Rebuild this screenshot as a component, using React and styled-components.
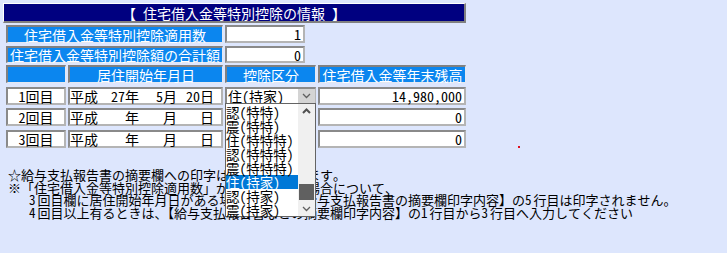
import React from "react";
import styled, { createGlobalStyle } from "styled-components";

const GlobalStyle = createGlobalStyle`
  html, body {
    margin: 0;
    padding: 0;
    background: #dde6fd;
  }
  body {
    font-family: "Noto Sans Mono CJK JP", "Noto Sans CJK JP", sans-serif;
    font-size: 14px;
    color: #000;
  }
`;

const Page = styled.div`
  position: relative;
  width: 727px;
  height: 253px;
  padding: 3px 0 0 3px;
  box-sizing: border-box;
  overflow: hidden;
`;

const TitleBar = styled.div`
  width: 463px;
  height: 20px;
  box-sizing: border-box;
  background: #000080;
  border-top: 1px solid #ffffff;
  border-left: 1px solid #ffffff;
  border-right: 2px solid #808080;
  border-bottom: 2px solid #808080;
  color: #fff;
  display: flex;
  align-items: center;
  justify-content: center;
  line-height: 14px;
  white-space: pre;
`;

const Table = styled.div`
  display: grid;
  grid-template-columns: 60px 155px 91px 148px;
  column-gap: 2px;
  margin-left: 3px;
`;

const Row = styled.div`
  display: contents;
`;

const Cell = styled.div`
  grid-column: ${(p) => p.$col || "auto"};
  height: ${(p) => p.$h || 18}px;
  margin-top: ${(p) => p.$mt || 0}px;
  box-sizing: border-box;
  display: flex;
  align-items: center;
  line-height: 14px;
  white-space: pre;
  position: relative;
`;

const Label = styled(Cell)`
  background: #0b86ef;
  color: #fff;
  border-top: 2px solid #808080;
  border-left: 2px solid #808080;
  border-right: 1px solid #e4e8f0;
  border-bottom: 1px solid #e4e8f0;
  justify-content: center;
`;

const Field = styled(Cell)`
  background: #fff;
  border-top: 2px solid #8a8a8a;
  border-left: 2px solid #8a8a8a;
  border-right: 2px solid #b4b4b4;
  border-bottom: 2px solid #b4b4b4;
  justify-content: ${(p) => (p.$align === "right" ? "flex-end" : p.$align === "center" ? "center" : "flex-start")};
  padding: 0 ${(p) => (p.$pad ?? 2)}px;
  width: ${(p) => (p.$w ? `${p.$w}px` : "auto")};
`;

const DateGrid = styled.div`
  display: grid;
  grid-template-columns: 27px 28px 14px 24px 14px 23px 14px;
  text-align: right;
  width: 100%;
  & > span:first-child {
    text-align: left;
  }
`;

const SelectField = styled(Field)`
  padding: 0 0 0 1px;
  justify-content: space-between;
  border-right: 1px solid #b4b4b4;
`;

const SelectButton = styled.div`
  width: 17px;
  height: 100%;
  background: #d4d4d4;
  display: flex;
  align-items: center;
  justify-content: center;
`;

const DropList = styled.div`
  position: absolute;
  top: 100%;
  left: -2px;
  width: 91px;
  height: 114px;
  box-sizing: border-box;
  background: #fff;
  border: 1px solid #646464;
  display: flex;
  z-index: 5;
`;

const Options = styled.div`
  flex: 1;
  padding-top: 1px;
`;

const Option = styled.div`
  height: 14px;
  line-height: 14px;
  font-size: 13.5px;
  white-space: pre;
  background: ${(p) => (p.$sel ? "#0078d7" : "transparent")};
  color: ${(p) => (p.$sel ? "#fff" : "#000")};
`;

const ScrollTrack = styled.div`
  width: 17px;
  background: #f0f0f0;
  display: flex;
  flex-direction: column;
  align-items: center;
  justify-content: space-between;
  padding: 4px 0 4px;
  box-sizing: border-box;
`;

const Thumb = styled.div`
  width: 15px;
  height: 16px;
  background: #606060;
  margin-top: auto;
  margin-bottom: 6px;
`;

const Notes = styled.div`
  margin: 21px 0 0 5px;
  font-size: 13px;
  line-height: 12.6px;
  white-space: pre;
`;

const NoteLine = styled.div`
  padding-left: ${(p) => p.$indent || 0}px;
`;

const Num = styled.span`
  display: inline-block;
  width: 8.5px;
`;

const Dot = styled.div`
  position: absolute;
  left: 518px;
  top: 146px;
  width: 2px;
  height: 2px;
  background: #e01020;
`;

const Chevron = ({ up }) => (
  <svg width="9" height="6" viewBox="0 0 9 6">
    <polyline
      points={up ? "1,5 4.5,1.5 8,5" : "1,1 4.5,4.5 8,1"}
      fill="none"
      stroke={up ? "#505050" : "#606060"}
      strokeWidth={up ? 2 : 1.3}
    />
  </svg>
);

const options = [
  "認(特特)",
  "震(特特)",
  "住(特特特)",
  "認(特特特)",
  "震(特特特)",
  "住(持家)",
  "認(持家)",
  "震(持家)",
];

const rows = [
  { no: "1回目", y: "27", m: "5", d: "20", amount: "14,980,000", mt: 4 },
  { no: "2回目", y: "", m: "", d: "", amount: "0", mt: 3 },
  { no: "3回目", y: "", m: "", d: "", amount: "0", mt: 4 },
];

export default function App() {
  return (
    <>
      <GlobalStyle />
      <Page>
        <TitleBar>{"【 住宅借入金等特別控除の情報 】"}</TitleBar>
        <Table>
          <Row>
            <Label $col="1 / 3" $mt={2}>住宅借入金等特別控除適用数</Label>
            <Field $col="3" $w={80} $mt={2} $align="right">1</Field>
          </Row>
          <Row>
            <Label $col="1 / 3" $mt={3} $h={17}>住宅借入金等特別控除額の合計額</Label>
            <Field $col="3" $w={80} $mt={3} $h={17} $align="right">0</Field>
          </Row>
          <Row>
            <Label $col="1" $mt={2}></Label>
            <Label $col="2" $mt={2}>居住開始年月日</Label>
            <Label $col="3" $mt={2}>控除区分</Label>
            <Label $col="4" $mt={2}>住宅借入金等年末残高</Label>
          </Row>
          {rows.map((r, i) => (
            <Row key={i}>
              <Field $col="1" $mt={r.mt} $align="center">{r.no}</Field>
              <Field $col="2" $mt={r.mt} $pad={0}>
                <DateGrid>
                  <span>平成</span>
                  <span>{r.y}</span>
                  <span>年</span>
                  <span>{r.m}</span>
                  <span>月</span>
                  <span>{r.d}</span>
                  <span>日</span>
                </DateGrid>
              </Field>
              {i === 0 ? (
                <SelectField $col="3" $mt={r.mt}>
                  <span>住(持家)</span>
                  <SelectButton>
                    <Chevron />
                  </SelectButton>
                  <DropList>
                    <Options>
                      {options.map((o, k) => (
                        <Option key={k} $sel={k === 5}>{o}</Option>
                      ))}
                    </Options>
                    <ScrollTrack>
                      <Chevron up />
                      <Thumb />
                      <Chevron />
                    </ScrollTrack>
                  </DropList>
                </SelectField>
              ) : (
                <Field $col="3" $mt={r.mt}></Field>
              )}
              <Field $col="4" $mt={r.mt} $align="right">{r.amount}</Field>
            </Row>
          ))}
        </Table>
        <Notes>
          <NoteLine>☆給与支払報告書の摘要欄への印字は自動で行われます。</NoteLine>
          <NoteLine>※「住宅借入金等特別控除適用数」が４回以上ある場合について、</NoteLine>
          <NoteLine $indent={21}>
            <Num>3</Num>回目欄に居住開始年月日がある場合には、 【給与支払報告書の摘要欄印字内容】の<Num>5</Num>行目は印字されません。
          </NoteLine>
          <NoteLine $indent={21}>
            <Num>4</Num>回目以上有るときは、【給与支払報告書などの摘要欄印字内容】の<Num>1</Num>行目から<Num>3</Num>行目へ入力してください
          </NoteLine>
        </Notes>
        <Dot />
      </Page>
    </>
  );
}
